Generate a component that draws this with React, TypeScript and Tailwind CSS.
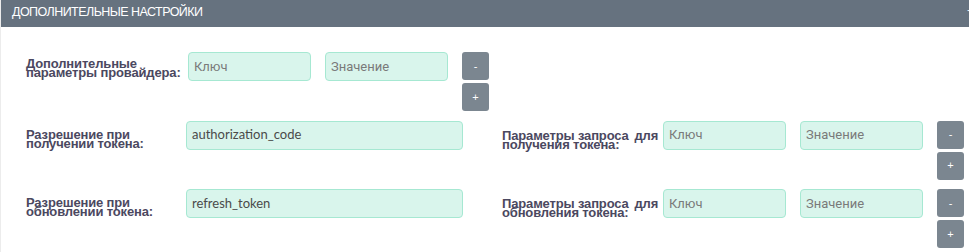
import React from "react";

const labelCls =
  "font-['Liberation_Sans',Arial,sans-serif] font-bold text-[13px] tracking-[-0.15px] leading-[9px] text-[#4b4860]";
const inputCls =
  "h-[29px] rounded-[4px] border border-[#a6e8d2] bg-[#d9f5ec] pl-[5px] font-['Lato','Liberation_Sans',sans-serif] text-[13px] text-[#4a4a4a] flex items-center";
const phCls = "text-[#7a7a7a] font-['Roboto','Liberation_Sans',sans-serif] text-[13px]";

function Btns() {
  return (
    <div className="flex flex-col gap-[3px]">
      <div className="w-[27px] h-[28px] rounded-[3px] bg-[#7b8690] flex items-center justify-center text-white text-[11px] font-['Liberation_Sans',Arial,sans-serif]">
        -
      </div>
      <div className="w-[27px] h-[28px] rounded-[3px] bg-[#7b8690] flex items-center justify-center text-white text-[11px] font-['Liberation_Sans',Arial,sans-serif]">
        +
      </div>
    </div>
  );
}

function Label({ l1, l2, w, pt }: { l1: string; l2: string; w: string; pt: string }) {
  return (
    <div className={`${labelCls} ${w} ${pt} shrink-0 whitespace-pre`}>
      <div>{l1}</div>
      <div>{l2}</div>
    </div>
  );
}

export default function App() {
  return (
    <div className="w-[969px] h-[252px] overflow-hidden bg-white">
      <div className="border-l border-[#ececec] h-full">
        <div className="h-[27px] bg-[#66727f] flex items-start justify-between pl-[11px] font-['Liberation_Sans',Arial,sans-serif] text-[12.5px] leading-[25px] text-white">
          <span className="tracking-[-0.55px]">ДОПОЛНИТЕЛЬНЫЕ НАСТРОЙКИ</span>
          <span className="mr-[-5px] -mt-[1px]">−</span>
        </div>
        <div className="pt-[25px] pl-[25px] flex flex-col gap-[9.5px]">
          <div className="flex items-start">
            <Label l1="Дополнительные" l2="параметры провайдера:" w="w-[162px]" pt="pt-[7px]" />
            <div className={`${inputCls} w-[123px]`}>
              <span className={phCls}>Ключ</span>
            </div>
            <div className={`${inputCls} w-[123px] ml-[14px]`}>
              <span className={phCls}>Значение</span>
            </div>
            <div className="ml-[14px]">
              <Btns />
            </div>
          </div>
          <div className="flex items-start">
            <div className="w-[476px] flex items-start shrink-0">
              <Label l1="Разрешение при" l2="получении токена:" w="w-[160px]" pt="pt-[9px]" />
              <div className={`${inputCls} w-[277px]`}>authorization_code</div>
            </div>
            <Label l1={"Параметры запроса\u2009 для"} l2="получения токена:" w="w-[161px]" pt="pt-[10px]" />
            <div className={`${inputCls} w-[123px]`}>
              <span className={phCls}>Ключ</span>
            </div>
            <div className={`${inputCls} w-[123px] ml-[14px]`}>
              <span className={phCls}>Значение</span>
            </div>
            <div className="ml-[14px]">
              <Btns />
            </div>
          </div>
          <div className="flex items-start">
            <div className="w-[476px] flex items-start shrink-0">
              <Label l1="Разрешение при" l2="обновлении токена:" w="w-[160px]" pt="pt-[9px]" />
              <div className={`${inputCls} w-[277px]`}>refresh_token</div>
            </div>
            <Label l1={"Параметры запроса\u2009 для"} l2="обновления токена:" w="w-[161px]" pt="pt-[10px]" />
            <div className={`${inputCls} w-[123px]`}>
              <span className={phCls}>Ключ</span>
            </div>
            <div className={`${inputCls} w-[123px] ml-[14px]`}>
              <span className={phCls}>Значение</span>
            </div>
            <div className="ml-[14px]">
              <Btns />
            </div>
          </div>
        </div>
      </div>
    </div>
  );
}
